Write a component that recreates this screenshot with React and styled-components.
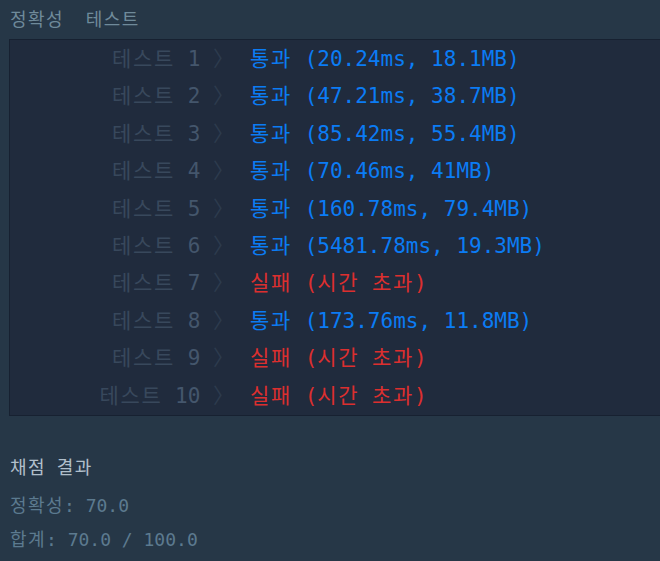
import React from "react"
import styled, { createGlobalStyle } from "styled-components"

const GlobalStyle = createGlobalStyle`
  html, body {
    margin: 0;
    padding: 0;
    background: #263747;
  }
  body {
    font-family: "DejaVu Sans Mono", "Noto Sans CJK KR", monospace;
  }
`

const Page = styled.div`
  width: 660px;
  height: 561px;
  overflow: hidden;
  background: #263747;
`

// hangul in the console font runs a touch wider than the fallback
const Ko = styled.span`
  letter-spacing: 0.08em;
`

const Title = styled.div`
  padding: 6px 10px 0;
  height: 33px;
  line-height: 28px;
  font-size: 18px;
  color: #6f8a9a;
  white-space: pre;
`

const Panel = styled.div`
  margin-left: 9px;
  background: #202b3d;
  border: 1px solid #172131;
  border-right: none;
  padding-top: 1px;
`

const Row = styled.div`
  display: grid;
  grid-template-columns: 224px 1fr;
  column-gap: 16px;
  height: 37.4px;
  line-height: 37.4px;
  font-size: 21px;
  white-space: pre;
`

const Label = styled.div`
  text-align: right;
  color: #38485c;
`

const Num = styled.span`
  color: #44566c;
`

const Arrow = styled.span`
  color: #2d3b4e;
`

const Result = styled.div`
  color: ${p => (p.$passed ? "#0b7cf4" : "#dc2f2f")};
`

const Summary = styled.div`
  padding: 37px 10px 0;
`

const SummaryTitle = styled.div`
  font-size: 18px;
  line-height: 30px;
  color: #b0bfcb;
  margin-bottom: 6px;
  white-space: pre;
`

const SummaryLine = styled.div`
  font-size: 18px;
  line-height: 34px;
  color: #5c7a8f;
  white-space: pre;
`

const tests = [
  { passed: true, time: "20.24ms", mem: "18.1MB" },
  { passed: true, time: "47.21ms", mem: "38.7MB" },
  { passed: true, time: "85.42ms", mem: "55.4MB" },
  { passed: true, time: "70.46ms", mem: "41MB" },
  { passed: true, time: "160.78ms", mem: "79.4MB" },
  { passed: true, time: "5481.78ms", mem: "19.3MB" },
  { passed: false },
  { passed: true, time: "173.76ms", mem: "11.8MB" },
  { passed: false },
  { passed: false },
]

const App = () => (
  <Page>
    <GlobalStyle />
    <Title>
      <Ko>정확성</Ko>  <Ko>테스트</Ko>
    </Title>
    <Panel>
      {tests.map((t, i) => (
        <Row key={i}>
          <Label>
            <Ko>테스트</Ko> <Num>{i + 1}</Num> <Arrow>〉</Arrow>
          </Label>
          {t.passed ? (
            <Result $passed>
              <Ko>통과</Ko> ({t.time}, {t.mem})
            </Result>
          ) : (
            <Result>
              <Ko>실패</Ko> (<Ko>시간</Ko> <Ko>초과</Ko>)
            </Result>
          )}
        </Row>
      ))}
    </Panel>
    <Summary>
      <SummaryTitle>
        <Ko>채점</Ko> <Ko>결과</Ko>
      </SummaryTitle>
      <SummaryLine>
        <Ko>정확성</Ko>: 70.0
      </SummaryLine>
      <SummaryLine>
        <Ko>합계</Ko>: 70.0 / 100.0
      </SummaryLine>
    </Summary>
  </Page>
)

export default App
